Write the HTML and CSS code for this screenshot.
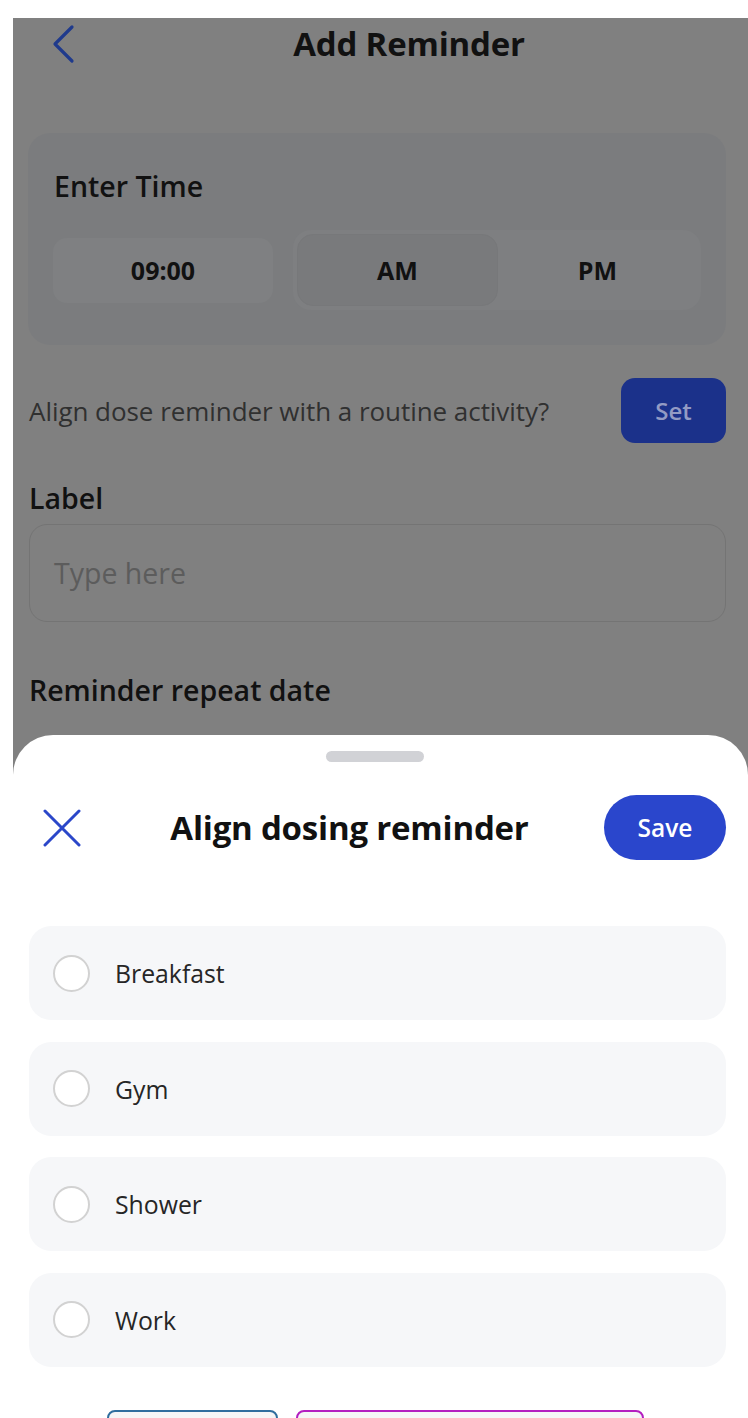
FILE: index.html
```html
<!DOCTYPE html>
<html lang="en">
<head>
<meta charset="utf-8">
<title>Add Reminder</title>
<link rel="stylesheet" href="styles.css">
</head>
<body>
<div class="screen">
  <header class="topbar">
    <svg class="back" width="24" height="40" viewBox="0 0 24 40" aria-hidden="true">
      <path d="M20 3 L3 20 L20 37" fill="none" stroke="#1f3a8c" stroke-width="3.2" stroke-linecap="round" stroke-linejoin="round"/>
    </svg>
    <h1 class="page-title">Add Reminder</h1>
  </header>

  <section class="time-card">
    <h2 class="card-title">Enter Time</h2>
    <div class="time-row">
      <div class="time-box">09:00</div>
      <div class="segment">
        <div class="seg seg-active">AM</div>
        <div class="seg">PM</div>
      </div>
    </div>
  </section>

  <div class="align-row">
    <p class="align-text">Align dose reminder with a routine activity?</p>
    <button class="set-btn">Set</button>
  </div>

  <h2 class="field-label">Label</h2>
  <div class="input">Type here</div>

  <h2 class="field-label repeat">Reminder repeat date</h2>

  <div class="sheet">
    <div class="handle"></div>
    <div class="sheet-head">
      <svg class="close" width="38" height="38" viewBox="0 0 38 38" aria-hidden="true">
        <path d="M2 2 L36 36 M36 2 L2 36" fill="none" stroke="#2b47c9" stroke-width="3" stroke-linecap="round"/>
      </svg>
      <h2 class="sheet-title">Align dosing reminder</h2>
      <button class="save-btn">Save</button>
    </div>
    <ul class="options">
      <li class="option"><span class="radio"></span><span class="opt-text">Breakfast</span></li>
      <li class="option"><span class="radio"></span><span class="opt-text">Gym</span></li>
      <li class="option"><span class="radio"></span><span class="opt-text">Shower</span></li>
      <li class="option"><span class="radio"></span><span class="opt-text">Work</span></li>
    </ul>
    <div class="bottom-actions">
      <div class="ghost ghost-blue"></div>
      <div class="ghost ghost-pink"></div>
    </div>
  </div>
</div>
</body>
</html>
```

FILE: styles.css
```css
* { box-sizing: border-box; }
html, body { margin: 0; padding: 0; background: #ffffff; }
body {
  padding: 18px 0 0 13px;
  font-family: "Open Sans", "Noto Sans", sans-serif;
  overflow: hidden;
}
.screen {
  position: relative;
  width: 735px;
  height: 1400px;
  background: #808080;
  overflow: hidden;
  padding: 0 22px 0 15px;
}
.topbar {
  display: flex;
  align-items: center;
  height: 52px;
  padding-left: 24px;
}
.back { display: block; flex: none; }
.page-title {
  flex: 1;
  margin: 0;
  text-align: center;
  font-size: 33px;
  font-weight: 700;
  color: #111;
  padding-left: 16px;
  line-height: 52px;
  letter-spacing: -0.2px;
}
.time-card {
  margin-top: 63px;
  height: 212px;
  background: #7b7c7e;
  border-radius: 22px;
  padding: 34px 25px 0 25px;
}
.card-title {
  margin: 0;
  font-size: 28.5px;
  font-weight: 600;
  color: #111;
  line-height: 38px;
  padding-left: 1px;
}
.time-row {
  display: flex;
  align-items: center;
  gap: 20px;
  margin-top: 25px;
}
.time-box {
  width: 220px;
  height: 65px;
  background: #7f8082;
  border-radius: 14px;
  display: flex;
  align-items: center;
  justify-content: center;
  font-size: 25px;
  font-weight: 700;
  color: #111;
}
.segment {
  flex: 1;
  height: 80px;
  background: #7e7f81;
  border-radius: 18px;
  display: flex;
  padding: 4px;
}
.seg {
  flex: 1;
  display: flex;
  align-items: center;
  justify-content: center;
  font-size: 25px;
  font-weight: 700;
  color: #111;
}
.seg-active {
  flex: none;
  width: 201px;
  background: #797a7c;
  border: 1px solid #77787a;
  border-radius: 16px;
}
.align-row {
  display: flex;
  align-items: center;
  justify-content: space-between;
  margin-top: 33px;
  padding-left: 1px;
}
.align-text {
  margin: 0;
  font-size: 26px;
  color: #303030;
  letter-spacing: -0.05px;
}
.set-btn {
  width: 105px;
  height: 65px;
  border: none;
  border-radius: 14px;
  background: #1b318a;
  color: #939bc4;
  font-family: inherit;
  font-size: 24px;
  font-weight: 600;
}
.field-label {
  margin: 36px 0 0 1px;
  font-size: 28.5px;
  font-weight: 600;
  color: #111;
  line-height: 38px;
}
.input {
  margin: 7px 0 0 1px;
  height: 98px;
  border: 1.5px solid #747474;
  border-radius: 18px;
  display: flex;
  align-items: center;
  padding-left: 24px;
  font-size: 28.5px;
  color: #5c5c5c;
}
.field-label.repeat { margin-top: 49px; }

.sheet {
  position: absolute;
  left: 0;
  right: 0;
  top: 717px;
  bottom: 0;
  background: #fff;
  border-radius: 40px 40px 0 0;
  overflow: hidden;
  padding: 0 22px 0 16px;
}
.handle {
  width: 98px;
  height: 11px;
  border-radius: 6px;
  background: #d1d2d6;
  margin: 16px auto 0;
  position: relative;
  left: -3px;
}
.sheet-head {
  display: flex;
  align-items: center;
  margin-top: 33px;
  height: 65px;
  padding-left: 14px;
}
.close { display: block; flex: none; }
.sheet-title {
  flex: 1;
  margin: 0;
  text-align: center;
  font-size: 33px;
  font-weight: 700;
  color: #111;
  padding-left: 14px;
  letter-spacing: -0.2px;
}
.save-btn {
  width: 122px;
  height: 65px;
  border: none;
  border-radius: 33px;
  background: #2a46cc;
  color: #fff;
  font-family: inherit;
  font-size: 24.5px;
  font-weight: 600;
}
.options {
  list-style: none;
  margin: 66px 0 0;
  padding: 0;
  display: flex;
  flex-direction: column;
  gap: 21.5px;
}
.option {
  height: 94px;
  background: #f6f7f9;
  border-radius: 22px;
  display: flex;
  align-items: center;
  padding-left: 24px;
}
.radio {
  width: 37px;
  height: 37px;
  border-radius: 50%;
  border: 2px solid #d2d2d2;
  background: #fff;
  flex: none;
}
.opt-text {
  margin-left: 25px;
  font-size: 24.8px;
  color: #262626;
}
.bottom-actions {
  display: flex;
  gap: 18px;
  margin-top: 43px;
  padding-left: 78px;
}
.ghost {
  height: 60px;
  flex: none;
  background: #f5f5f6;
  border: 2px solid;
  border-radius: 8px;
}
.ghost-blue { width: 171px; border-color: #2f6d9e; }
.ghost-pink { width: 348px; border-color: #b41ec0; }
```
